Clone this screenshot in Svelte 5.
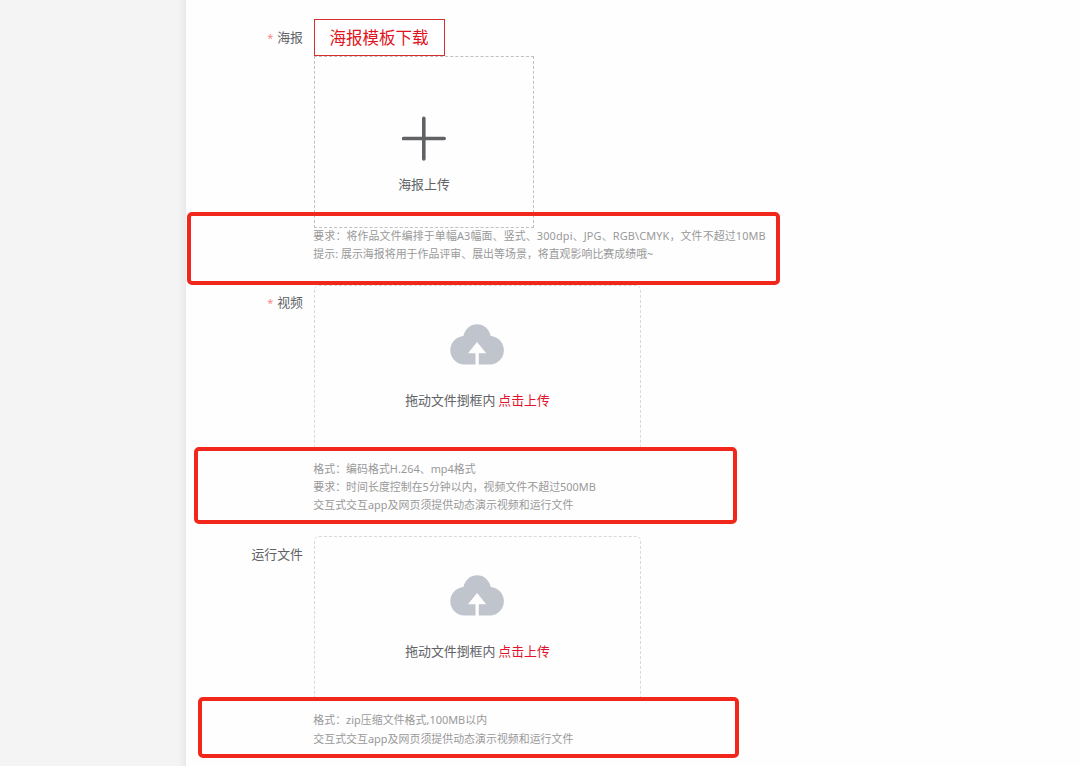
<script>
  const fields = [
    {
      id: 'video', label: '视频', required: true,
      hints: ['格式：编码格式H.264、mp4格式', '要求：时间长度控制在5分钟以内，视频文件不超过500MB', '交互式交互app及网页须提供动态演示视频和运行文件']
    },
    {
      id: 'runtime', label: '运行文件', required: false,
      hints: ['格式：zip压缩文件格式,100MB以内', '交互式交互app及网页须提供动态演示视频和运行文件']
    }
  ];
  const posterHints = [
    '要求：将作品文件编排于单幅A3幅面、竖式、300dpi、JPG、RGB\\CMYK，文件不超过10MB',
    '提示: 展示海报将用于作品评审、展出等场景，将直观影响比赛成绩哦~'
  ];
</script>

{#snippet hintLines(lines)}
  <div class="hints">
    {#each lines as text}
      <p>{text}</p>
    {/each}
  </div>
{/snippet}

<div class="page">
  <aside></aside>
  <main>
    <section class="row poster">
      <div class="label"><span class="star">*</span>海报</div>
      <div class="control">
        <button class="download">海报模板下载</button>
        <div class="poster-drop">
          <svg class="plus" width="44" height="46" viewBox="0 0 44 46">
            <path d="M1.500 22.500H42.200M21.800 2.200V43" stroke="#606266" stroke-width="3.600" stroke-linecap="round" />
          </svg>
          <span>海报上传</span>
        </div>
        {@render hintLines(posterHints)}
      </div>
      <div class="mark"></div>
    </section>

    {#each fields as field}
      <section class="row {field.id}">
        <div class="label">{#if field.required}<span class="star">*</span>{/if}{field.label}</div>
        <div class="control">
          <div class="drop">
            <svg class="cloud" width="55" height="41" viewBox="0 0 55 41">
              <path fill="#c0c4cc" d="M13.400 12.100C15 5 20.500.3 27.100.3S39.200 5 40.800 12.100C48 12.700 53.900 18.900 53.900 26.300 53.900 34.200 47.600 40.600 39.700 40.600H28.800V29.200H36.200L27.100 18 18 29.200H25.500V40.600H14.500C6.600 40.600.3 34.200.3 26.300.3 18.900 6.200 12.700 13.400 12.100Z" />
            </svg>
            <div class="drop-text">拖动文件捯框内 <em>点击上传</em></div>
          </div>
          {@render hintLines(field.hints)}
        </div>
        <div class="mark"></div>
      </section>
    {/each}
  </main>
</div>

<style>
  :global(body) { margin: 0; background: #fff; }
  .page {
    display: flex;
    width: 1080px;
    height: 766px;
    overflow: hidden;
    font-family: "Noto Sans", "Noto Sans CJK SC", sans-serif;
    color: #606266;
  }
  aside { width: 186px; flex: none; background: linear-gradient(to right, #f4f4f4 178px, #e9e9e9 186px); }
  main { flex: 1; background: #fefefe; }
  .row { position: relative; display: flex; box-sizing: border-box; }
  .poster { height: 285px; padding-top: 19px; }
  .video { height: 251px; }
  .runtime { height: 230px; }
  .label {
    width: 117px;
    margin-right: 11px;
    text-align: right;
    font-size: 12.9px;
    line-height: 36px;
    white-space: nowrap;
  }
  .video .label { line-height: 34px; }
  .star { color: #f78989; margin-right: 4px; font-size: 11px; }
  .control { flex: 1; }
  .download {
    display: block;
    box-sizing: border-box;
    width: 131px;
    height: 37px;
    padding: 0 1px 0 0;
    border: 1px solid #d32f2f;
    background: #fff;
    color: #e0141c;
    font-family: inherit;
    font-size: 16.5px;
    line-height: 35px;
    text-align: center;
  }
  .poster-drop {
    box-sizing: border-box;
    width: 220px;
    height: 172px;
    border: 1px dashed #c0c0c0;
    display: flex;
    flex-direction: column;
    align-items: center;
    padding-top: 59px;
    font-size: 12.9px;
    line-height: 20px;
  }
  .plus { margin-bottom: 12px; }
  .drop {
    box-sizing: border-box;
    width: 327px;
    height: 165px;
    border: 1px dashed #d9d9d9;
    border-radius: 5px;
    display: flex;
    flex-direction: column;
    align-items: center;
    padding-top: 38px;
  }
  .drop-text { margin-top: 25px; font-size: 12.9px; line-height: 20px; white-space: nowrap; }
  .drop-text em { font-style: normal; color: #e0142c; margin-left: -0.5px; }
  .hints { margin-left: -0.7px; font-size: 10.9px; line-height: 18.2px; color: #999; letter-spacing: 0.04px; }
  .poster .hints { margin-top: -1px; }
  .poster .hints p:first-child { letter-spacing: 0.16px; }
  .video .hints, .runtime .hints { margin-top: 10px; }
  .runtime .hints { line-height: 18.6px; }
  .hints p { margin: 0; white-space: nowrap; }
  .mark {
    position: absolute;
    box-sizing: border-box;
    border: 4px solid #f2271c;
    border-radius: 5px;
  }
  .poster .mark { left: 1px; top: 212px; width: 593px; height: 73px; }
  .video .mark { left: 8px; top: 162px; width: 543px; height: 77px; }
  .runtime .mark { left: 12px; top: 161px; width: 541px; height: 61px; }
</style>
